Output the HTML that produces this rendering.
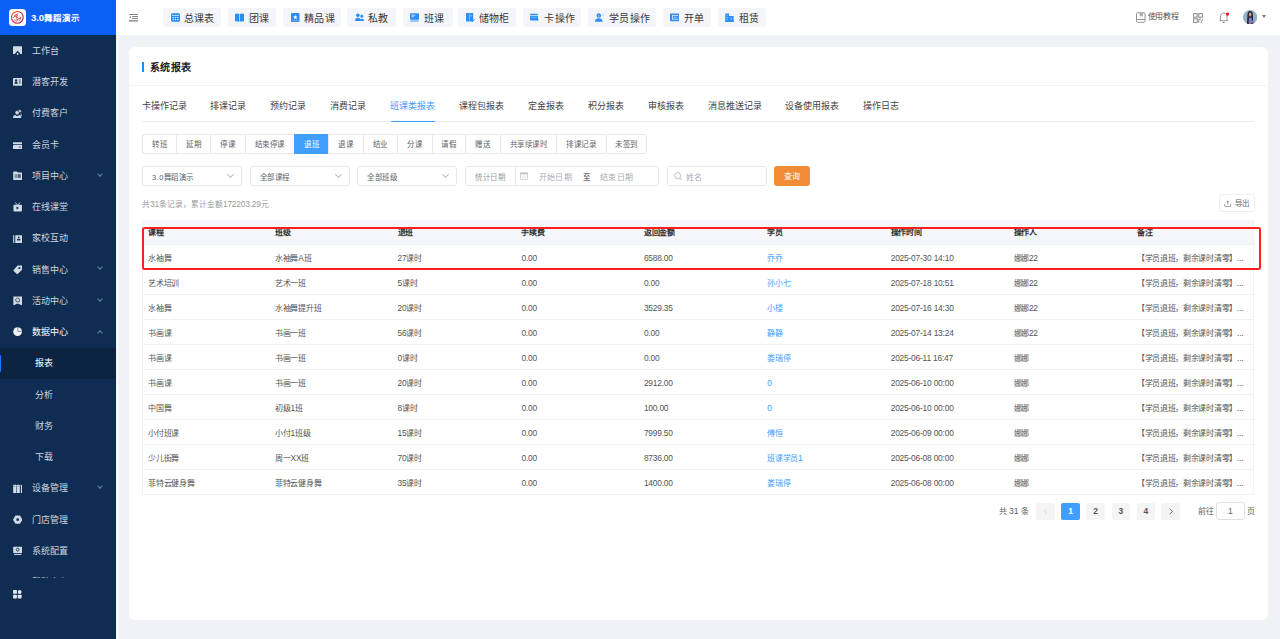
<!DOCTYPE html><html lang="zh-CN"><head><meta charset="utf-8"><style>
*{box-sizing:border-box;margin:0;padding:0}
html,body{width:1280px;height:639px;overflow:hidden;background:#f0f2f5;font-family:"Liberation Sans",sans-serif;color:#333}
#side{position:absolute;left:0;top:0;width:116.4px;height:639px;background:#0f2c52;overflow:hidden}
#logo{position:absolute;left:0;top:0;width:116.6px;height:35px;background:#0a60f6}
#menu{position:absolute;left:0;top:0;width:116px;height:578.3px;overflow:hidden}
#sideline{position:absolute;left:116.6px;top:35px;width:1.3px;height:604px;background:#fdfdfe}
#hdr{position:absolute;left:116px;top:0;width:1164px;height:35px;background:#fff}
#card{position:absolute;left:128.9px;top:47px;width:1138.7px;height:573px;background:#fff;border-radius:6px}
.mi{position:absolute;left:0;width:116px;height:31.25px;color:#d0d6df;font-size:9px;letter-spacing:-0.1px;line-height:31px}
.mi.act{background:#0c2442;color:#fff}
.mi.act:before{content:"";position:absolute;left:0;top:7px;width:1.4px;height:17px;background:#1677ff;border-radius:0 1px 1px 0}
.mi .t{position:absolute;left:32.1px;top:0.9px}
.mi.open .t{color:#fff}
.mi .t.sub{left:35px}
.mi .ic{position:absolute;left:12.7px;top:11px;width:9.4px;height:9.4px}
.mi .ch{position:absolute;left:98.3px;top:11.6px;width:4px;height:4px;border-right:1px solid #6f809a;border-bottom:1px solid #6f809a;transform:rotate(45deg)}
.mi .ch.up{transform:rotate(-135deg);top:14.3px}
.hb{position:absolute;top:8px;height:19px;background:#f3f5f9;border-radius:3px;font-size:10px;letter-spacing:0.2px;line-height:19px;color:#3a3a3a;white-space:nowrap}
.hb svg{position:absolute;left:8px;top:5px;width:9px;height:9px}
.hb .t{position:absolute;left:21px;top:0.7px}
.tab{position:absolute;top:97.7px;font-size:9px;letter-spacing:-0.1px;line-height:16px;color:#444;white-space:nowrap}
.tab.act{color:#409eff}
.bg{position:absolute;top:134px;height:20px;border:1px solid #e6e8ec;border-right:none;font-size:7.5px;letter-spacing:0.5px;line-height:20.3px;color:#606266;text-align:center;white-space:nowrap;background:#fff}
.bg.first{border-radius:3px 0 0 3px}
.bg.last{border-right:1px solid #e6e8ec;border-radius:0 3px 3px 0}
.bg.act{background:#409eff;border-color:#409eff;color:#fff}
.sel{position:absolute;top:166px;height:20px;border:1px solid #e6e8ec;border-radius:3px;font-size:7.5px;letter-spacing:0.5px;line-height:21.9px;color:#606266;padding-left:9px;white-space:nowrap;background:#fff}
.sel .ar{position:absolute;right:8px;top:5px;width:5px;height:5px;border-right:1px solid #b8bcc4;border-bottom:1px solid #b8bcc4;transform:rotate(45deg)}
.ph{color:#a8abb2}
.th,.td{position:absolute;font-size:8px;letter-spacing:-0.3px;line-height:13px;white-space:nowrap}
.a{font-size:8.4px;letter-spacing:-0.2px}
.th{color:#333;font-weight:bold}
.td{color:#555}
.td.lk{color:#409eff}
.pg{position:absolute;top:503px;width:18.7px;height:17px;background:#f4f4f5;border-radius:2px;font-size:8.5px;line-height:17px;text-align:center;font-weight:bold;color:#555}
.pg.act{background:#409eff;color:#fff}
</style></head><body>
<div id="side"><div id="menu"><div class="mi" style="top:35.00px"><svg class="ic" viewBox="0 0 10 10"><path d="M1 0.3 H9 Q10 0.3 10 1.3 V8.4 H0 V1.3 Q0 0.3 1 0.3Z" fill="#d3dae4"/><path d="M2.2 9.3 L5 6.1 L7.8 9.3" stroke="#0f2c52" stroke-width="1.3" fill="none"/><path d="M3.7 9.7 L5 8.2 L6.3 9.7Z" fill="#d3dae4"/></svg><span class="t">工作台</span></div>
<div class="mi" style="top:66.25px"><svg class="ic" viewBox="0 0 10 10"><rect x="0" y="1" width="10" height="8.3" rx="0.8" fill="#d3dae4"/><circle cx="3.3" cy="3.7" r="1.25" fill="#0f2c52"/><path d="M1.4 7.3 Q1.4 5.1 3.3 5.1 Q5.2 5.1 5.2 7.3Z" fill="#0f2c52"/><rect x="6" y="2.8" width="2.5" height="0.8" fill="#0f2c52" opacity="0.8"/><rect x="6.7" y="4.2" width="1.2" height="3" fill="#0f2c52" opacity="0.7"/></svg><span class="t">潜客开发</span></div>
<div class="mi" style="top:97.50px"><svg class="ic" viewBox="0 0 10 10"><circle cx="7.2" cy="2.3" r="1.7" fill="#d3dae4" stroke="#0f2c52" stroke-width="0.7"/><path d="M7.6 4.5 Q10 5.2 10 8 L8.2 8 Z" fill="#d3dae4" stroke="#0f2c52" stroke-width="0.6"/><circle cx="4.4" cy="4" r="2.3" fill="#d3dae4" stroke="#0f2c52" stroke-width="0.7"/><path d="M0 9.8 Q0 6.4 2.2 6.3 L4.4 7.8 L6.6 6.3 Q8.8 6.4 8.8 9.8Z" fill="#d3dae4"/></svg><span class="t">付费客户</span></div>
<div class="mi" style="top:128.75px"><svg class="ic" viewBox="0 0 10 10"><rect x="0" y="2.4" width="10" height="2" rx="0.6" fill="#d3dae4"/><rect x="0" y="5.4" width="10" height="4.4" rx="0.6" fill="#d3dae4"/><rect x="6.2" y="7" width="2.2" height="1.1" rx="0.5" fill="#0f2c52" opacity="0.8"/></svg><span class="t">会员卡</span></div>
<div class="mi" style="top:160.00px"><svg class="ic" viewBox="0 0 10 10"><path d="M0.8 0.4 H4.2 L5.2 1.5 H9.5 Q10 1.5 10 2 V9.6 H0.2 V1 Q0.2 0.4 0.8 0.4Z" fill="#d3dae4"/><rect x="1.8" y="3.4" width="3" height="4" fill="#0f2c52" opacity="0.45"/><rect x="5.2" y="3.4" width="3" height="4" fill="#0f2c52" opacity="0.7"/></svg><span class="t">项目中心</span><i class="ch"></i></div>
<div class="mi" style="top:191.25px"><svg class="ic" viewBox="0 0 10 10"><rect x="0.5" y="3" width="9" height="7" rx="1" fill="#d3dae4"/><path d="M2.3 0.6 L5 3.2 L7.7 0.6" stroke="#d3dae4" stroke-width="1" fill="none"/><path d="M3.7 4.8 L6.5 6.4 L3.7 8Z" fill="#0f2c52"/></svg><span class="t">在线课堂</span></div>
<div class="mi" style="top:222.50px"><svg class="ic" viewBox="0 0 10 10"><rect x="0.2" y="1.3" width="1.1" height="8.4" fill="#d3dae4"/><rect x="2.4" y="1.3" width="7.4" height="8.4" rx="0.5" fill="#d3dae4"/><circle cx="6.1" cy="3.5" r="0.95" fill="#0f2c52"/><rect x="4.4" y="5" width="3.4" height="2" rx="0.4" fill="#0f2c52"/></svg><span class="t">家校互动</span></div>
<div class="mi" style="top:253.75px"><svg class="ic" viewBox="0 0 10 10"><path d="M9.6 0.4 L9.5 5.2 L4.4 10 L0.2 5.8 L4.9 0.6 Z" fill="#d3dae4"/><rect x="5.9" y="2.4" width="1.9" height="1.9" fill="#0f2c52"/></svg><span class="t">销售中心</span><i class="ch"></i></div>
<div class="mi" style="top:285.00px"><svg class="ic" viewBox="0 0 10 10"><path d="M0.4 0.6 H9.6 V10 L5 8 L0.4 10Z" fill="#d3dae4"/><path d="M5 2 L7.3 3.6 L6.5 6.2 L3.5 6.2 L2.7 3.6Z" fill="none" stroke="#0f2c52" stroke-width="0.9" opacity="0.85"/></svg><span class="t">活动中心</span><i class="ch"></i></div>
<div class="mi open" style="top:316.25px"><svg class="ic" viewBox="0 0 10 10"><circle cx="4.9" cy="5" r="4.7" fill="#f2f4f7"/><path d="M5.2 0 V4.7 H10" stroke="#0f2c52" stroke-width="0.75" fill="none" opacity="0.7"/></svg><span class="t">数据中心</span><i class="ch up"></i></div>
<div class="mi act" style="top:347.50px"><span class="t sub">报表</span></div>
<div class="mi" style="top:378.75px"><span class="t sub">分析</span></div>
<div class="mi" style="top:410.00px"><span class="t sub">财务</span></div>
<div class="mi" style="top:441.25px"><span class="t sub">下载</span></div>
<div class="mi" style="top:472.50px"><svg class="ic" viewBox="0 0 10 10"><rect x="0.2" y="0.8" width="3.3" height="9" rx="0.5" fill="#d3dae4"/><rect x="4" y="0.8" width="3.3" height="9" rx="0.5" fill="#d3dae4"/><rect x="8.4" y="0.8" width="1.3" height="9" rx="0.5" fill="#d3dae4"/><circle cx="1.8" cy="2.3" r="0.5" fill="#0f2c52"/><circle cx="5.6" cy="2.3" r="0.5" fill="#0f2c52"/></svg><span class="t">设备管理</span><i class="ch"></i></div>
<div class="mi" style="top:503.75px"><svg class="ic" viewBox="0 0 10 10"><path d="M2.6 0.6 L7.4 0.6 L10 5 L7.4 9.4 L2.6 9.4 L0 5Z" fill="#d3dae4"/><circle cx="5" cy="5" r="1.5" fill="#0f2c52"/></svg><span class="t">门店管理</span></div>
<div class="mi" style="top:535.00px"><svg class="ic" viewBox="0 0 10 10"><rect x="0.2" y="0.8" width="9.6" height="6.6" rx="0.4" fill="#d3dae4"/><circle cx="5" cy="3.9" r="1.5" fill="none" stroke="#0f2c52" stroke-width="0.9"/><rect x="1" y="8.4" width="8" height="1.1" fill="#d3dae4"/></svg><span class="t">系统配置</span></div>
<div class="mi" style="top:566.25px"><svg class="ic" viewBox="0 0 10 10"><rect x="0.5" y="1" width="9" height="8" rx="1" fill="#d3dae4"/></svg><span class="t">帮助中心</span></div></div>
<div id="logo"><div style="position:absolute;left:8.9px;top:8.9px;width:17.5px;height:17.4px;background:#fff;border-radius:3.5px"><svg viewBox="0 0 20 20" style="position:absolute;left:1.4px;top:1.4px;width:14.7px;height:14.7px"><defs><linearGradient id="lg" x1="0" y1="0" x2="1" y2="1"><stop offset="0" stop-color="#ec5a3a"/><stop offset="0.5" stop-color="#d8323f"/><stop offset="1" stop-color="#9a2a63"/></linearGradient></defs><circle cx="10" cy="10" r="8" fill="none" stroke="url(#lg)" stroke-width="1.6"/><path d="M4.6 11 Q5.5 6.2 10.8 5.2" stroke="url(#lg)" stroke-width="1.3" fill="none"/><path d="M6.2 8.2 L11.5 6.8 L9.2 9.2 L12 9.6 L7.5 12.2 L9 10.2Z" fill="#e03a3a"/><path d="M8.6 15.8 Q9.5 11.8 14.8 10.6" stroke="url(#lg)" stroke-width="1.3" fill="none"/><path d="M11.5 15.6 Q14.2 13.8 14.6 9" stroke="url(#lg)" stroke-width="1" fill="none"/><path d="M5.5 13.5 Q7.5 14.6 9.2 12.4" stroke="#c33050" stroke-width="1" fill="none"/></svg></div><span style="position:absolute;left:31px;top:10px;font-size:8.5px;letter-spacing:0.1px;line-height:15px;color:#fff;font-weight:bold;white-space:nowrap"><span style="font-size:9.6px;letter-spacing:-0.1px">3.0</span>舞蹈演示</span></div>
<svg viewBox="0 0 10 10" style="position:absolute;left:13px;top:590px;width:8.7px;height:8.5px"><rect x="0" y="0" width="4.5" height="4.5" rx="0.8" fill="#e3e7ec"/><circle cx="7.7" cy="2.3" r="2.3" fill="#e3e7ec"/><rect x="0" y="5.5" width="4.5" height="4.5" rx="0.8" fill="#e3e7ec"/><rect x="5.5" y="5.5" width="4.5" height="4.5" rx="0.8" fill="#e3e7ec"/></svg>
</div>
<div id="sideline"></div>
<div id="hdr">
<svg viewBox="0 0 9 8" style="position:absolute;left:13px;top:14px;width:9px;height:8px"><rect x="0" y="0" width="9" height="0.9" fill="#777"/><rect x="3" y="2" width="6" height="0.9" fill="#777"/><rect x="3" y="4" width="6" height="0.9" fill="#777"/><rect x="0" y="6.1" width="9" height="1.4" fill="#888"/><path d="M0 3.4 L2 2.3 L2 4.5Z" fill="#777"/></svg>
<div class="hb" style="left:46.5px;width:58.5px"><svg viewBox="0 0 10 10" style="left:8.099999999999994px"><rect x="0" y="0.3" width="10" height="9.4" rx="1.6" fill="#2c8df6"/><rect x="0.9" y="2.2" width="8.2" height="0.7" fill="#fff"/><rect x="1.8" y="4.6" width="1.4" height="1.1" fill="#fff"/><rect x="4.3" y="4.6" width="1.4" height="1.1" fill="#fff"/><rect x="6.8" y="4.6" width="1.4" height="1.1" fill="#fff"/><rect x="1.8" y="6.8" width="1.4" height="1.1" fill="#fff"/><rect x="4.3" y="6.8" width="1.4" height="1.1" fill="#fff"/><rect x="6.8" y="6.8" width="1.4" height="1.1" fill="#fff"/></svg><span class="t" style="left:21.25px">总课表</span></div>
<div class="hb" style="left:111.5px;width:48.5px"><svg viewBox="0 0 10 10" style="left:7.800000000000011px"><path d="M0 1 Q2.6 -0.2 4.7 1.2 L4.7 9.8 Q2.6 8.6 0 9.4Z" fill="#2c8df6"/><path d="M5.3 1.2 Q7.4 -0.2 10 1 L10 9.4 Q7.4 8.6 5.3 9.8Z" fill="#2c8df6"/><rect x="4.6" y="1.2" width="0.8" height="8.6" fill="#9ccaf9"/></svg><span class="t" style="left:21.25px">团课</span></div>
<div class="hb" style="left:167px;width:58px"><svg viewBox="0 0 10 10" style="left:8px"><rect x="0" y="0" width="9.5" height="10" rx="1" fill="#2c8df6"/><path d="M4.75 2 L5.5 3.8 L7.3 3.9 L5.9 5.1 L6.4 6.9 L4.75 5.9 L3.1 6.9 L3.6 5.1 L2.2 3.9 L4 3.8Z" fill="#fff"/><rect x="1.5" y="8.2" width="7" height="0.6" fill="#9ccaf9"/></svg><span class="t" style="left:21.25px">精品课</span></div>
<div class="hb" style="left:231px;width:49px"><svg viewBox="0 0 10 10" style="left:8.300000000000011px"><circle cx="3.2" cy="2.6" r="2" fill="#2c8df6"/><path d="M0 8.8 Q0 5.4 3.2 5.4 Q6.4 5.4 6.4 8.8Z" fill="#2c8df6"/><circle cx="7.6" cy="3.6" r="1.6" fill="#2c8df6"/><path d="M5.4 8.8 Q5.4 6 7.7 6 Q10 6 10 8.8Z" fill="#2c8df6"/></svg><span class="t" style="left:21.25px">私教</span></div>
<div class="hb" style="left:287px;width:49.5px"><svg viewBox="0 0 10 10" style="left:7.300000000000011px"><rect x="0" y="0.3" width="10" height="7.2" rx="1" fill="#2c8df6"/><rect x="1.6" y="2" width="4.2" height="0.8" fill="#fff"/><rect x="1.6" y="3.8" width="2.8" height="0.8" fill="#fff"/><rect x="0.3" y="8.4" width="9.4" height="1" fill="#2c8df6"/></svg><span class="t" style="left:21.25px">班课</span></div>
<div class="hb" style="left:341.5px;width:58.5px"><svg viewBox="0 0 10 10" style="left:8.100000000000023px"><rect x="0" y="0" width="8" height="9.4" rx="0.6" fill="#2c8df6"/><rect x="3.6" y="0.8" width="0.8" height="7.6" fill="#9ccaf9"/><rect x="4.9" y="2.8" width="1.5" height="0.8" fill="#fff"/><path d="M6.6 9.8 L9.8 7.2" stroke="#2c8df6" stroke-width="1"/></svg><span class="t" style="left:21.25px">储物柜</span></div>
<div class="hb" style="left:407.1px;width:57.5px"><svg viewBox="0 0 10 10" style="left:6.899999999999977px"><rect x="0" y="0.8" width="8.8" height="7.6" rx="1.2" fill="#2c8df6"/><rect x="0" y="2.6" width="8.8" height="0.8" fill="#fff"/><rect x="1" y="4.6" width="6" height="0.6" fill="#9ccaf9"/><path d="M7.4 6.2 L10 7.6 L8.2 8.8Z" fill="#2c8df6"/></svg><span class="t" style="left:21.25px">卡操作</span></div>
<div class="hb" style="left:472px;width:68px"><svg viewBox="0 0 10 10" style="left:7.2999999999999545px"><circle cx="4.2" cy="2.8" r="2.5" fill="#2c8df6"/><circle cx="4.2" cy="3.2" r="0.6" fill="#fff"/><path d="M0 9.6 Q0 5.7 4.2 5.7 Q8.4 5.7 8.4 9.6Z" fill="#2c8df6"/><rect x="8.6" y="1" width="0.9" height="2.8" fill="#9ccaf9"/></svg><span class="t" style="left:21.25px">学员操作</span></div>
<div class="hb" style="left:546.8px;width:48.5px"><svg viewBox="0 0 10 10" style="left:7.5px"><rect x="0" y="0.5" width="10" height="8.6" rx="0.5" fill="#2c8df6"/><rect x="2.2" y="2.2" width="6.8" height="5.2" fill="#cfe4fb"/><rect x="3.2" y="3.2" width="5.8" height="3.2" fill="#2c8df6"/><rect x="4.2" y="4.3" width="3" height="0.8" fill="#cfe4fb"/></svg><span class="t" style="left:21.25px">开单</span></div>
<div class="hb" style="left:601.8px;width:48.5px"><svg viewBox="0 0 10 10" style="left:7.2000000000000455px"><path d="M0.3 0.6 L4.5 0.6 L4.5 3.2 L9.6 3.2 L9.6 9.6 L0.3 9.6Z" fill="#2c8df6"/><rect x="1.6" y="2.4" width="1.4" height="1" fill="#9ccaf9"/><rect x="1.6" y="4.4" width="1.4" height="1" fill="#9ccaf9"/><rect x="1.6" y="6.4" width="1.4" height="1" fill="#9ccaf9"/><rect x="6.3" y="5.4" width="1.6" height="1.6" fill="#9ccaf9"/><rect x="0" y="9" width="10" height="1" fill="#2c8df6"/></svg><span class="t" style="left:21.25px">租赁</span></div>
<svg viewBox="0 0 10 11" style="position:absolute;left:1020px;top:11.9px;width:9.5px;height:11px"><rect x="0.5" y="0.5" width="9" height="10" rx="1" fill="none" stroke="#8a8a8a" stroke-width="0.95"/><path d="M0.5 7.6 H9.5" stroke="#8a8a8a" stroke-width="0.95"/><path d="M4.4 0.6 V4.2 L5.5 3.4 L6.6 4.2 V0.6" fill="#bbb" stroke="#888" stroke-width="0.7"/></svg>
<span style="position:absolute;left:1031.5px;top:11px;font-size:8px;letter-spacing:-0.2px;line-height:12px;color:#555;white-space:nowrap">使用教程</span>
<svg viewBox="0 0 10 10" style="position:absolute;left:1076.8px;top:12.7px;width:10px;height:10px"><rect x="0.6" y="0.6" width="3.6" height="3.6" fill="none" stroke="#8a8a8a" stroke-width="1"/><rect x="5.8" y="0.6" width="3.6" height="3.6" fill="none" stroke="#8a8a8a" stroke-width="1"/><rect x="0.6" y="5.8" width="3.6" height="3.6" fill="none" stroke="#8a8a8a" stroke-width="1"/><path d="M5.8 5.5 V10 M5.8 6.8 Q7 5.8 8 6 M8.2 7.2 V10 M9.5 5.8 V7.5" stroke="#8a8a8a" stroke-width="0.9" fill="none"/></svg>
<svg viewBox="0 0 10 12" style="position:absolute;left:1103px;top:11.5px;width:9.5px;height:11.4px"><path d="M1.5 9 V5.5 Q1.5 1.2 5 1.2 Q8.5 1.2 8.5 5.5 V9" fill="none" stroke="#8a8a8a" stroke-width="0.95"/><path d="M0.4 9.2 H9.6" stroke="#8a8a8a" stroke-width="0.95"/><rect x="4" y="10.6" width="2" height="0.9" rx="0.4" fill="#777"/><circle cx="9" cy="2.2" r="1.75" fill="#ff1a1a"/></svg>
<svg viewBox="0 0 20 20" style="position:absolute;left:1126.9px;top:10px;width:14.3px;height:14.4px"><defs><clipPath id="av"><circle cx="10" cy="10" r="10"/></clipPath></defs><g clip-path="url(#av)"><rect width="20" height="20" fill="#93b3ca"/><path d="M5.5 20 L6.2 6.5 Q6.5 1.6 10 1.5 Q13.5 1.6 13.8 6.5 L14.5 20Z" fill="#28272c"/><ellipse cx="10" cy="6.2" rx="1.8" ry="2.7" fill="#c7a396"/><path d="M8 18.5 L8.2 11 Q10 10.2 11.8 11 L12.6 14 L15.6 17.5 L14.8 19 L12 17 L12 18.5Z" fill="#7c79c6"/><path d="M8.3 18.4 H11.8 V20 H8.3Z" fill="#c89a8a"/></g></svg>
<div style="position:absolute;left:1145.9px;top:15px;width:0;height:0;border-left:2.3px solid transparent;border-right:2.3px solid transparent;border-top:3px solid #777"></div>
</div>
<div id="card"></div>
<div style="position:absolute;left:142px;top:62px;width:2px;height:10px;background:#1890ff"></div>
<span style="position:absolute;left:150px;top:59.5px;font-size:10px;letter-spacing:0.25px;line-height:16px;color:#222;font-weight:bold;white-space:nowrap">系统报表</span>
<div style="position:absolute;left:129px;top:85px;width:1138px;height:1px;background:#f2f3f5"></div>
<span class="tab" style="left:142px">卡操作记录</span>
<span class="tab" style="left:210px">排课记录</span>
<span class="tab" style="left:270px">预约记录</span>
<span class="tab" style="left:330px">消费记录</span>
<span class="tab act" style="left:390px">班课类报表</span>
<span class="tab" style="left:459px">课程包报表</span>
<span class="tab" style="left:528px">定金报表</span>
<span class="tab" style="left:588px">积分报表</span>
<span class="tab" style="left:648px">审核报表</span>
<span class="tab" style="left:708px">消息推送记录</span>
<span class="tab" style="left:785px">设备使用报表</span>
<span class="tab" style="left:863px">操作日志</span>
<div style="position:absolute;left:142px;top:121px;width:1112px;height:1px;background:#e8eaee"></div>
<div style="position:absolute;left:390.6px;top:120.7px;width:44px;height:1.7px;background:#409eff;border-radius:1px"></div>
<div class="bg first" style="left:142.2px;width:34.10000000000002px">转班</div>
<div class="bg" style="left:176.3px;width:34.099999999999994px">延期</div>
<div class="bg" style="left:210.4px;width:34.19999999999999px">停课</div>
<div class="bg" style="left:244.6px;width:49.400000000000006px">结束停课</div>
<div class="bg act" style="left:294px;width:34px">退班</div>
<div class="bg" style="left:328px;width:34.5px">退课</div>
<div class="bg" style="left:362.5px;width:34.0px">结业</div>
<div class="bg" style="left:396.5px;width:35.0px">分课</div>
<div class="bg" style="left:431.5px;width:33.80000000000001px">请假</div>
<div class="bg" style="left:465.3px;width:34.19999999999999px">赠送</div>
<div class="bg" style="left:499.5px;width:56.89999999999998px">共享续课时</div>
<div class="bg" style="left:556.4px;width:49.10000000000002px">排课记录</div>
<div class="bg last" style="left:605.5px;width:41.700000000000045px">未签到</div>
<div class="sel" style="left:142px;width:99.5px">3.0舞蹈演示<i class="ar"></i></div>
<div class="sel" style="left:249.5px;width:100px">全部课程<i class="ar"></i></div>
<div class="sel" style="left:357px;width:100px">全部班级<i class="ar"></i></div>
<div class="sel ph" style="left:465px;width:51px;border-radius:3px 0 0 3px;padding-left:9px;color:#999">统计日期</div>
<div class="sel" style="left:515px;width:144px;border-radius:0 3px 3px 0;padding-left:0"><svg viewBox="0 0 10 10" style="position:absolute;left:4px;top:5px;width:8px;height:8px"><rect x="0.5" y="1" width="9" height="8.5" fill="none" stroke="#c0c4cc" stroke-width="0.8"/><rect x="0.5" y="1" width="9" height="2" fill="#c0c4cc"/><path d="M2 5 H8 M2 7 H8" stroke="#c0c4cc" stroke-width="0.5"/></svg><span class="ph" style="position:absolute;left:22.5px;font-size:8px;letter-spacing:0.4px">开始日期</span><span style="position:absolute;left:67px;color:#333">至</span><span class="ph" style="position:absolute;left:84px;font-size:8px;letter-spacing:0.4px">结束日期</span></div>
<div class="sel" style="left:666.5px;width:100px;padding-left:0"><svg viewBox="0 0 10 10" style="position:absolute;left:6px;top:5px;width:8.5px;height:8.5px"><circle cx="4.3" cy="4.3" r="3.6" fill="none" stroke="#a8abb2" stroke-width="0.9"/><path d="M7 7 L9.3 9.3" stroke="#a8abb2" stroke-width="0.9"/></svg><span class="ph" style="position:absolute;left:18px;font-size:8px;letter-spacing:0.2px">姓名</span></div>
<div style="position:absolute;left:774px;top:166.2px;width:36px;height:19.7px;background:#ef8c35;border-radius:3px;color:#fff;font-size:8px;line-height:21.5px;text-align:center">查询</div>
<span style="position:absolute;left:142px;top:198px;font-size:7.7px;line-height:12px;color:#999;white-space:nowrap">共<span class="a">31</span>条记录，累计金额<span class="a">172203.29</span>元</span>
<div style="position:absolute;left:1218.5px;top:193.6px;width:36px;height:18.8px;border:1px solid #eeeff2;border-radius:3px;font-size:7.5px;line-height:17px;color:#666;white-space:nowrap"><svg viewBox="0 0 10 10" style="position:absolute;left:4.8px;top:5.6px;width:7.4px;height:7px"><path d="M5 6.8 L5 1.2 M2.8 3.4 L5 1.2 L7.2 3.4 M0.8 6 L0.8 9.2 L9.2 9.2 L9.2 6" fill="none" stroke="#888" stroke-width="1.1"/></svg><span style="position:absolute;left:15.2px;top:0.8px;letter-spacing:0.3px">导出</span></div>
<div style="position:absolute;left:142px;top:220px;width:1112px;height:25px;background:#f5f7fa"></div><div style="position:absolute;left:142px;top:244px;width:1112px;height:1px;background:#eff0f3"></div><div style="position:absolute;left:142px;top:269px;width:1112px;height:1px;background:#eff0f3"></div><div style="position:absolute;left:142px;top:294px;width:1112px;height:1px;background:#eff0f3"></div><div style="position:absolute;left:142px;top:319px;width:1112px;height:1px;background:#eff0f3"></div><div style="position:absolute;left:142px;top:344px;width:1112px;height:1px;background:#eff0f3"></div><div style="position:absolute;left:142px;top:369px;width:1112px;height:1px;background:#eff0f3"></div><div style="position:absolute;left:142px;top:394px;width:1112px;height:1px;background:#eff0f3"></div><div style="position:absolute;left:142px;top:419px;width:1112px;height:1px;background:#eff0f3"></div><div style="position:absolute;left:142px;top:444px;width:1112px;height:1px;background:#eff0f3"></div><div style="position:absolute;left:142px;top:469px;width:1112px;height:1px;background:#eff0f3"></div><div style="position:absolute;left:142px;top:494px;width:1112px;height:1px;background:#eff0f3"></div><div style="position:absolute;left:142px;top:220px;width:1px;height:275px;background:#f0f1f5"></div><div style="position:absolute;left:1253px;top:220px;width:1px;height:275px;background:#f0f1f5"></div><span class="th" style="left:148.2px;top:226px">课程</span><span class="th" style="left:275.1px;top:226px">班级</span><span class="th" style="left:397.5px;top:226px">退班</span><span class="th" style="left:521.4px;top:226px">手续费</span><span class="th" style="left:643.9px;top:226px">返回金额</span><span class="th" style="left:767.3px;top:226px">学员</span><span class="th" style="left:890.7px;top:226px">操作时间</span><span class="th" style="left:1013.5px;top:226px">操作人</span><span class="th" style="left:1136.9px;top:226px">备注</span><span class="td" style="left:148.2px;top:251.6px">水袖舞</span><span class="td" style="left:275.1px;top:251.6px">水袖舞<span class="a">A</span>班</span><span class="td" style="left:397.5px;top:251.6px"><span class="a">27</span>课时</span><span class="td" style="left:521.4px;top:251.6px"><span class="a">0.00</span></span><span class="td" style="left:643.9px;top:251.6px"><span class="a">6588.00</span></span><span class="td lk" style="left:767.3px;top:251.6px">乔乔</span><span class="td" style="left:890.7px;top:251.6px"><span class="a">2025-07-30 14:10</span></span><span class="td" style="left:1013.5px;top:251.6px">娜娜<span class="a">22</span></span><span class="td" style="left:1136.9px;top:251.6px">【学员退班，剩余课时清零】<span class="a">...</span></span><span class="td" style="left:148.2px;top:276.6px">艺术培训</span><span class="td" style="left:275.1px;top:276.6px">艺术一班</span><span class="td" style="left:397.5px;top:276.6px"><span class="a">5</span>课时</span><span class="td" style="left:521.4px;top:276.6px"><span class="a">0.00</span></span><span class="td" style="left:643.9px;top:276.6px"><span class="a">0.00</span></span><span class="td lk" style="left:767.3px;top:276.6px">孙小七</span><span class="td" style="left:890.7px;top:276.6px"><span class="a">2025-07-18 10:51</span></span><span class="td" style="left:1013.5px;top:276.6px">娜娜<span class="a">22</span></span><span class="td" style="left:1136.9px;top:276.6px">【学员退班，剩余课时清零】<span class="a">...</span></span><span class="td" style="left:148.2px;top:301.6px">水袖舞</span><span class="td" style="left:275.1px;top:301.6px">水袖舞提升班</span><span class="td" style="left:397.5px;top:301.6px"><span class="a">20</span>课时</span><span class="td" style="left:521.4px;top:301.6px"><span class="a">0.00</span></span><span class="td" style="left:643.9px;top:301.6px"><span class="a">3529.35</span></span><span class="td lk" style="left:767.3px;top:301.6px">小楼</span><span class="td" style="left:890.7px;top:301.6px"><span class="a">2025-07-16 14:30</span></span><span class="td" style="left:1013.5px;top:301.6px">娜娜<span class="a">22</span></span><span class="td" style="left:1136.9px;top:301.6px">【学员退班，剩余课时清零】<span class="a">...</span></span><span class="td" style="left:148.2px;top:326.6px">书画课</span><span class="td" style="left:275.1px;top:326.6px">书画一班</span><span class="td" style="left:397.5px;top:326.6px"><span class="a">56</span>课时</span><span class="td" style="left:521.4px;top:326.6px"><span class="a">0.00</span></span><span class="td" style="left:643.9px;top:326.6px"><span class="a">0.00</span></span><span class="td lk" style="left:767.3px;top:326.6px">静静</span><span class="td" style="left:890.7px;top:326.6px"><span class="a">2025-07-14 13:24</span></span><span class="td" style="left:1013.5px;top:326.6px">娜娜<span class="a">22</span></span><span class="td" style="left:1136.9px;top:326.6px">【学员退班，剩余课时清零】<span class="a">...</span></span><span class="td" style="left:148.2px;top:351.6px">书画课</span><span class="td" style="left:275.1px;top:351.6px">书画一班</span><span class="td" style="left:397.5px;top:351.6px"><span class="a">0</span>课时</span><span class="td" style="left:521.4px;top:351.6px"><span class="a">0.00</span></span><span class="td" style="left:643.9px;top:351.6px"><span class="a">0.00</span></span><span class="td lk" style="left:767.3px;top:351.6px">娄瑞停</span><span class="td" style="left:890.7px;top:351.6px"><span class="a">2025-06-11 16:47</span></span><span class="td" style="left:1013.5px;top:351.6px">娜娜</span><span class="td" style="left:1136.9px;top:351.6px">【学员退班，剩余课时清零】<span class="a">...</span></span><span class="td" style="left:148.2px;top:376.6px">书画课</span><span class="td" style="left:275.1px;top:376.6px">书画一班</span><span class="td" style="left:397.5px;top:376.6px"><span class="a">20</span>课时</span><span class="td" style="left:521.4px;top:376.6px"><span class="a">0.00</span></span><span class="td" style="left:643.9px;top:376.6px"><span class="a">2912.00</span></span><span class="td lk" style="left:767.3px;top:376.6px"><span class="a">0</span></span><span class="td" style="left:890.7px;top:376.6px"><span class="a">2025-06-10 00:00</span></span><span class="td" style="left:1013.5px;top:376.6px">娜娜</span><span class="td" style="left:1136.9px;top:376.6px">【学员退班，剩余课时清零】<span class="a">...</span></span><span class="td" style="left:148.2px;top:401.6px">中国舞</span><span class="td" style="left:275.1px;top:401.6px">初级<span class="a">1</span>班</span><span class="td" style="left:397.5px;top:401.6px"><span class="a">8</span>课时</span><span class="td" style="left:521.4px;top:401.6px"><span class="a">0.00</span></span><span class="td" style="left:643.9px;top:401.6px"><span class="a">100.00</span></span><span class="td lk" style="left:767.3px;top:401.6px"><span class="a">0</span></span><span class="td" style="left:890.7px;top:401.6px"><span class="a">2025-06-10 00:00</span></span><span class="td" style="left:1013.5px;top:401.6px">娜娜</span><span class="td" style="left:1136.9px;top:401.6px">【学员退班，剩余课时清零】<span class="a">...</span></span><span class="td" style="left:148.2px;top:426.6px">小付班课</span><span class="td" style="left:275.1px;top:426.6px">小付<span class="a">1</span>班级</span><span class="td" style="left:397.5px;top:426.6px"><span class="a">15</span>课时</span><span class="td" style="left:521.4px;top:426.6px"><span class="a">0.00</span></span><span class="td" style="left:643.9px;top:426.6px"><span class="a">7999.50</span></span><span class="td lk" style="left:767.3px;top:426.6px">傅恒</span><span class="td" style="left:890.7px;top:426.6px"><span class="a">2025-06-09 00:00</span></span><span class="td" style="left:1013.5px;top:426.6px">娜娜</span><span class="td" style="left:1136.9px;top:426.6px">【学员退班，剩余课时清零】<span class="a">...</span></span><span class="td" style="left:148.2px;top:451.6px">少儿街舞</span><span class="td" style="left:275.1px;top:451.6px">周一<span class="a">XX</span>班</span><span class="td" style="left:397.5px;top:451.6px"><span class="a">70</span>课时</span><span class="td" style="left:521.4px;top:451.6px"><span class="a">0.00</span></span><span class="td" style="left:643.9px;top:451.6px"><span class="a">8736.00</span></span><span class="td lk" style="left:767.3px;top:451.6px">班课学员<span class="a">1</span></span><span class="td" style="left:890.7px;top:451.6px"><span class="a">2025-06-08 00:00</span></span><span class="td" style="left:1013.5px;top:451.6px">娜娜</span><span class="td" style="left:1136.9px;top:451.6px">【学员退班，剩余课时清零】<span class="a">...</span></span><span class="td" style="left:148.2px;top:476.6px">菲特云健身舞</span><span class="td" style="left:275.1px;top:476.6px">菲特云健身舞</span><span class="td" style="left:397.5px;top:476.6px"><span class="a">35</span>课时</span><span class="td" style="left:521.4px;top:476.6px"><span class="a">0.00</span></span><span class="td" style="left:643.9px;top:476.6px"><span class="a">1400.00</span></span><span class="td lk" style="left:767.3px;top:476.6px">娄瑞停</span><span class="td" style="left:890.7px;top:476.6px"><span class="a">2025-06-08 00:00</span></span><span class="td" style="left:1013.5px;top:476.6px">娜娜</span><span class="td" style="left:1136.9px;top:476.6px">【学员退班，剩余课时清零】<span class="a">...</span></span>
<div style="position:absolute;left:142px;top:227px;width:1119px;height:43px;border:2px solid #ff1f1f;border-radius:2.5px"></div>
<span style="position:absolute;left:998.5px;top:504.5px;font-size:8px;letter-spacing:0.1px;line-height:13px;color:#606266;white-space:nowrap">共 <span style="font-size:8.6px">31</span> 条</span>
<div class="pg dis" style="left:1036.3px"><svg viewBox="0 0 10 10" style="position:absolute;left:6.5px;top:5px;width:6px;height:7px"><path d="M6.5 1 L3 5 L6.5 9" stroke="#c0c4cc" stroke-width="1" fill="none"/></svg></div>
<div class="pg act" style="left:1061.3px">1</div>
<div class="pg " style="left:1086.4px">2</div>
<div class="pg " style="left:1111.5px">3</div>
<div class="pg " style="left:1136.5px">4</div>
<div class="pg nx" style="left:1161.4px"><svg viewBox="0 0 10 10" style="position:absolute;left:6.5px;top:5px;width:6px;height:7px"><path d="M3 0.5 L7.2 5 L3 9.5" stroke="#333" stroke-width="1.2" fill="none"/></svg></div>
<span style="position:absolute;left:1198px;top:504.5px;font-size:8px;letter-spacing:-0.5px;line-height:13px;color:#606266;white-space:nowrap">前往</span>
<div style="position:absolute;left:1216px;top:502px;width:29px;height:18px;border:1px solid #dcdfe6;border-radius:3px;font-size:8.6px;line-height:17px;text-align:center;color:#606266">1</div>
<span style="position:absolute;left:1246.5px;top:504.5px;font-size:8px;line-height:13px;color:#606266;white-space:nowrap">页</span>
</body></html>
